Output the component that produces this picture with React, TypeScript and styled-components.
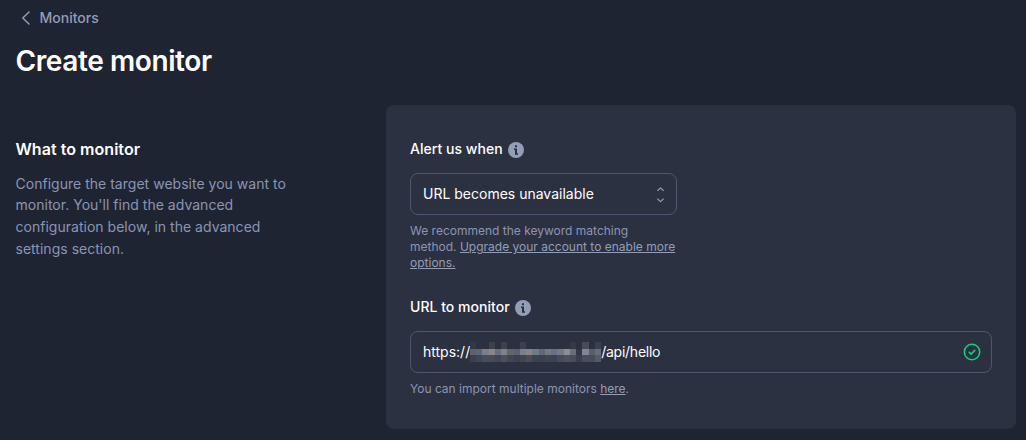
import React from "react";
import styled, { createGlobalStyle } from "styled-components";

const GlobalStyle = createGlobalStyle`
  * {
    box-sizing: border-box;
  }

  body {
    margin: 0;
    background: #1f2432;
    color: #ffffff;
    font-family: Inter, "Liberation Sans", sans-serif;
    font-size: 14px;
  }
`;

const Page = styled.main`
  min-height: 440px;
  padding: 7px 10px 11px 15.5px;
`;

const BackLink = styled.a`
  display: flex;
  align-items: center;
  gap: 8px;
  height: 22px;
  padding-left: 4px;
  color: #949db8;
  font-weight: 500;
  line-height: 22px;
`;

const Title = styled.h1`
  margin: 13px 0 24px;
  font-size: 28px;
  font-weight: 600;
  line-height: 39px;
  letter-spacing: -0.4px;
`;

const Columns = styled.div`
  display: grid;
  grid-template-columns: 370.5px 1fr;
`;

const Intro = styled.section`
  padding-top: 32px;
`;

const IntroTitle = styled.h2`
  margin: 0 0 11.65px;
  font-size: 16px;
  font-weight: 600;
  line-height: 24px;
  letter-spacing: 0.04px;
`;

const IntroText = styled.p`
  width: 290px;
  margin: 0;
  color: #8b95b3;
  line-height: 21.7px;
  letter-spacing: 0.02px;
`;

const Card = styled.section`
  height: 324px;
  padding: 33px 24px 0;
  border-radius: 8px;
  background: #2b3140;
`;

const Field = styled.div`
  & + & {
    margin-top: 25px;
  }
`;

const Label = styled.label`
  display: flex;
  gap: 5.5px;
  height: 23px;
  font-weight: 500;
  line-height: 22px;
  letter-spacing: 0.03px;

  svg {
    margin-top: 4px;
  }
`;

const Control = styled.div<{ $width?: string }>`
  display: flex;
  align-items: center;
  width: ${({ $width }) => $width || "100%"};
  height: 42px;
  margin-top: 12px;
  padding: 0 10px 0 12px;
  border: 1px solid #4c566e;
  border-radius: 8px;
  line-height: 20px;
  white-space: pre;
`;

const Value = styled.span`
  display: flex;
  align-items: center;
  height: 20px;
`;

const Path = styled.span`
  letter-spacing: -0.25px;
`;

const Trailing = styled.span`
  display: flex;
  margin-left: auto;
`;

const Hint = styled.p`
  width: 267px;
  margin: 8px 0 0;
  color: #8b95b3;
  font-size: 12px;
  line-height: 16px;
`;

const HintLink = styled.a`
  color: #949db8;
  text-decoration: underline;
`;

const Mosaic = styled.svg`
  display: block;
  flex: none;
`;

// Pixelated host name, one row of cells per line
const cells = [
  [
    "#343846", "#2b3140", "#2b3140", "#3c404f", "#2b3140", "#3c414f", "#2b3140",
    "#2b3140", "#3c414f", "#2b3140", "#2b3140", "#2b3140", "#2b3140", "#2b3140",
    "#2b3140", "#2b3140", "#343847", "#2b3140", "#484c59", "#2b3140", "#3c404e",
  ],
  [
    "#5e6270", "#606573", "#7b7f8d", "#8b8589", "#676d7c", "#7d8388", "#63656d",
    "#596172", "#7b7e8d", "#8a8283", "#707b88", "#60697b", "#77777e", "#65728a",
    "#757985", "#8a8e92", "#66707c", "#343748", "#838793", "#595e6c", "#696d78",
  ],
  [
    "#3b404e", "#414653", "#484d59", "#484c58", "#414653", "#4b505b", "#414653",
    "#3b4150", "#414653", "#484c58", "#3c4250", "#3b4150", "#414552", "#3b4252",
    "#484c58", "#4d525d", "#484d59", "#393d4d", "#484e5c", "#484d5a", "#565a66",
  ],
];

const columns = [0, 6, 12, 19, 25, 31, 37, 44, 50, 56, 62, 69, 75, 81, 87, 94, 100, 106, 112, 119, 125, 131];
const rows = [0, 7, 13, 20];

function HiddenHost() {
  return (
    <Mosaic width="131" height="20" shapeRendering="crispEdges" aria-hidden="true">
      {cells.map((row, y) =>
        row.map((fill, x) => (
          <rect
            key={`${x}-${y}`}
            x={columns[x]}
            y={rows[y]}
            width={columns[x + 1] - columns[x]}
            height={rows[y + 1] - rows[y]}
            fill={fill}
          />
        ))
      )}
    </Mosaic>
  );
}

function BackIcon() {
  return (
    <svg width="12" height="16" viewBox="0 0 12 16" fill="none">
      <path d="M9 2L2.8 8 9 14" stroke="#949db8" strokeWidth="1.5" strokeLinecap="round" strokeLinejoin="round" />
    </svg>
  );
}

function InfoIcon() {
  return (
    <svg width="16" height="16" viewBox="0 0 16 16">
      <circle cx="8" cy="8" r="8" fill="#949db8" />
      <path d="M7 3.2h2v2H7zM6 6.5h3v4.7h1v1.6H7V8H6z" fill="#2b3140" />
    </svg>
  );
}

function SortIcon() {
  return (
    <svg width="10" height="18" viewBox="0 0 10 18" fill="none">
      <path d="M1.7 5.5l2.8-2.7 2.8 2.7M1.7 14l2.8 2.7L7.3 14" stroke="#949db8" strokeWidth="1.1" strokeLinecap="round" strokeLinejoin="round" />
    </svg>
  );
}

function CheckIcon() {
  return (
    <svg width="18" height="18" viewBox="0 0 18 18" fill="none" stroke="#10cb81" strokeWidth="1.6">
      <circle cx="9" cy="9" r="7.7" />
      <path d="M6.3 9.3l1.9 1.8 3.5-3.7" strokeLinecap="round" strokeLinejoin="round" />
    </svg>
  );
}

export default function App() {
  return (
    <>
      <GlobalStyle />
      <Page>
        <BackLink>
          <BackIcon />
          Monitors
        </BackLink>
        <Title>Create monitor</Title>
        <Columns>
          <Intro>
            <IntroTitle>What to monitor</IntroTitle>
            <IntroText>
              Configure the target website you want to monitor. You'll find the advanced
              configuration below, in the advanced settings section.
            </IntroText>
          </Intro>
          <Card>
            <Field>
              <Label>
                Alert us when
                <InfoIcon />
              </Label>
              <Control $width="267px">
                <Value>URL becomes unavailable</Value>
                <Trailing>
                  <SortIcon />
                </Trailing>
              </Control>
              <Hint>
                We recommend the keyword matching method.{" "}
                <HintLink>Upgrade your account to enable more options.</HintLink>
              </Hint>
            </Field>
            <Field>
              <Label>
                URL to monitor
                <InfoIcon />
              </Label>
              <Control>
                <Value>
                  https://
                  <HiddenHost />
                  <Path>/api/hello</Path>
                </Value>
                <Trailing>
                  <CheckIcon />
                </Trailing>
              </Control>
              <Hint>
                You can import multiple monitors <HintLink>here</HintLink>.
              </Hint>
            </Field>
          </Card>
        </Columns>
      </Page>
    </>
  );
}
